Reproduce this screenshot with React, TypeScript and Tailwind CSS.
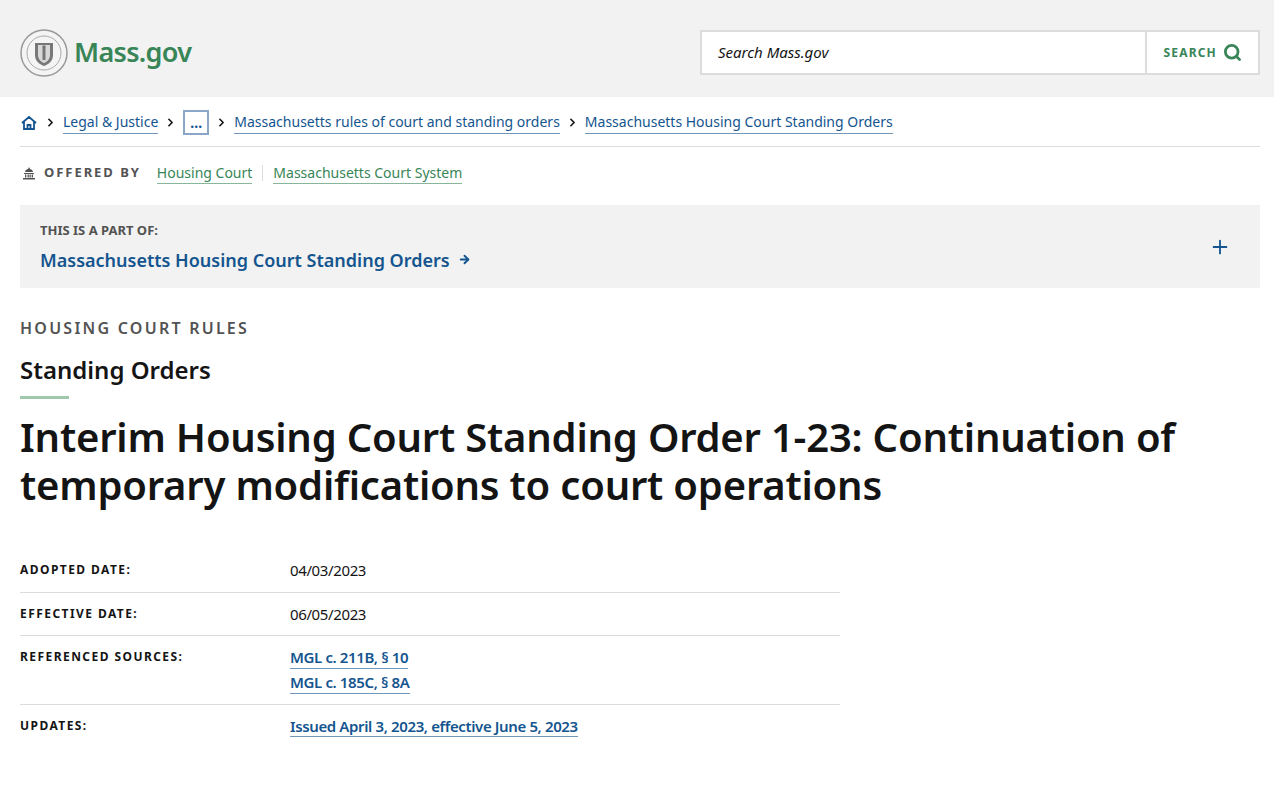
import { Search, ChevronRight, Plus, ArrowRight } from 'lucide-react';

const font = { fontFamily: '"Noto Sans", "Open Sans", sans-serif' };

function Seal() {
  return (
    <svg width="48" height="48" viewBox="0 0 48 48">
      <circle cx="24" cy="24" r="23" fill="#f4f4f4" stroke="#999" strokeWidth="1.5" />
      <circle cx="24" cy="24" r="17" fill="none" stroke="#aaa" strokeWidth="1" />
      <path d="M15 14 h18 v12 c0 6 -4 9 -9 11 c-5 -2 -9 -5 -9 -11z" fill="#777" />
      <path d="M18 16 h12 v10 c0 4 -3 7 -6 8 c-3 -1 -6 -4 -6 -8z" fill="#d8d8d8" />
      <rect x="22.5" y="19" width="3" height="12" fill="#777" />
      <circle cx="24" cy="18" r="1.8" fill="#777" />
    </svg>
  );
}

function Row({ label, children, last }: { label: string; children: React.ReactNode; last?: boolean }) {
  return (
    <div className={`flex py-[10px] ${last ? '' : 'border-b border-[#dcdcdc]'}`}>
      <div className="w-[270px] text-[12px] font-bold tracking-[0.12em] text-[#141414] pt-[2px]">{label}</div>
      <div className="text-[15px] text-[#141414] tracking-tight">{children}</div>
    </div>
  );
}

const lnk = 'text-[#14558f] border-b border-[#14558f]/60 leading-[22px]';
const tlnk = 'text-[#14558f] font-semibold border-b border-[#14558f]/60 leading-[22px]';

export default function App() {
  return (
    <div className="min-h-screen bg-white" style={font}>
      <header className="bg-[#f2f2f2] h-[97px] flex items-center justify-between pl-5 pr-[14px] pt-[8px]">
        <div className="flex items-center gap-1.5">
          <Seal />
          <span className="text-[27px] font-semibold text-[#388557] tracking-tight">Mass.gov</span>
        </div>
        <div className="flex h-[45px] w-[560px] border-2 border-[#dcdcdc] bg-white">
          <div className="flex-1 flex items-center px-4 italic text-[15px] text-[#141414]">Search Mass.gov</div>
          <div className="flex items-center gap-1.5 px-4 border-l-2 border-[#dcdcdc] text-[12px] font-bold tracking-[0.1em] text-[#388557]">
            SEARCH <Search size={19} strokeWidth={3.5} />
          </div>
        </div>
      </header>

      <div className="pl-5 pr-[14px]">
        <nav className="flex items-center gap-1.5 h-[50px] border-b border-[#dcdcdc] text-[14px] pt-[2px]">
          <svg width="18" height="16" viewBox="0 0 18 16" fill="none" stroke="#14558f" strokeWidth="1.8">
            <path d="M2 8 L9 2 L16 8 M4 7 V14 H14 V7 M7.5 14 V10 H10.5 V14" />
          </svg>
          <ChevronRight size={13} strokeWidth={3} className="text-[#141414]" />
          <a className={lnk}>Legal &amp; Justice</a>
          <ChevronRight size={13} strokeWidth={3} className="text-[#141414]" />
          <span className="border-2 border-[#8aa7c7] px-[5px] h-[25px] flex items-center text-[#14558f] font-bold">…</span>
          <ChevronRight size={13} strokeWidth={3} className="text-[#141414]" />
          <a className={lnk}>Massachusetts rules of court and standing orders</a>
          <ChevronRight size={13} strokeWidth={3} className="text-[#141414]" />
          <a className={lnk}>Massachusetts Housing Court Standing Orders</a>
        </nav>

        <div className="flex items-center h-[52px] text-[14px]">
          <svg width="14" height="14" viewBox="0 0 14 14" fill="#535353" className="ml-[2px] mr-2">
            <path d="M7 1 L8 3 C10 3.5 11 5 11 6 H3 C3 5 4 3.5 6 3z M2 7 H12 V8 H2z M3 8.5 h1.3 v3 H3z M5.5 8.5 h1.3 v3 H5.5z M7.5 8.5 h1.3 v3 H7.5z M9.7 8.5 h1.3 v3 H9.7z M1 12 H13 V13.5 H1z" />
          </svg>
          <span className="font-bold text-[13px] tracking-[0.15em] text-[#535353] mr-4">OFFERED BY</span>
          <a className="text-[#388557] border-b border-[#388557]/60 leading-[20px]">Housing Court</a>
          <span className="mx-2.5 h-4 border-l border-[#dcdcdc]" />
          <a className="text-[#388557] border-b border-[#388557]/60 leading-[20px]">Massachusetts Court System</a>
        </div>

        <div className="bg-[#f2f2f2] h-[83px] flex items-center justify-between px-5 mt-[6px]">
          <div>
            <div className="text-[13px] font-bold text-[#535353] leading-4">THIS IS A PART OF:</div>
            <div className="flex items-center gap-2 mt-[10px] text-[18px] font-semibold text-[#14558f] leading-6">
              Massachusetts Housing Court Standing Orders <ArrowRight size={13} strokeWidth={3.5} />
            </div>
          </div>
          <Plus size={22} strokeWidth={2} className="text-[#14558f] mr-[9px]" />
        </div>

        <div className="mt-[28px] text-[16px] font-semibold tracking-[0.14em] text-[#535353] leading-6">HOUSING COURT RULES</div>
        <div className="mt-[14px] text-[24px] font-semibold text-[#141414] leading-8">Standing Orders</div>
        <div className="mt-[10px] w-[49px] h-[3px] bg-[#9fc9ad]" />
        <h1 className="mt-[14px] text-[40px] font-semibold text-[#141414] leading-[48px] tracking-[-0.005em]">
          Interim Housing Court Standing Order 1-23: Continuation of temporary modifications to court operations
        </h1>

        <div className="mt-[40px] w-[820px]">
          <Row label="ADOPTED DATE:">04/03/2023</Row>
          <Row label="EFFECTIVE DATE:">06/05/2023</Row>
          <Row label="REFERENCED SOURCES:">
            <div className="flex flex-col items-start gap-[2px]">
              <a className={tlnk}>MGL c. 211B, § 10</a>
              <a className={tlnk}>MGL c. 185C, § 8A</a>
            </div>
          </Row>
          <Row label="UPDATES:" last>
            <a className={tlnk}>Issued April 3, 2023, effective June 5, 2023</a>
          </Row>
        </div>
      </div>
    </div>
  );
}
